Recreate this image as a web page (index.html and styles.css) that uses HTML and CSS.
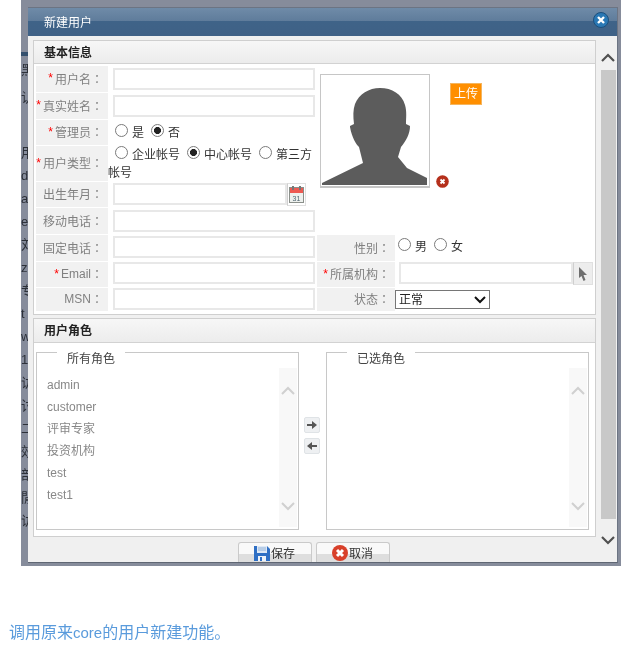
FILE: index.html
```html
<!DOCTYPE html>
<html lang="en">
<head>
  <meta charset="UTF-8" />
  <title>新建用户</title>
  <link rel="stylesheet" href="styles.css">
</head>
<body>
  <div class="backdrop">
    <div class="strip">
      <div class="strip-bar"></div>
      <div class="strip-row first">黑</div>
      <div class="strip-row second">认</div>
      <div class="strip-row">用</div>
      <div class="strip-row">d</div>
      <div class="strip-row">a</div>
      <div class="strip-row">e</div>
      <div class="strip-row">刘</div>
      <div class="strip-row">z</div>
      <div class="strip-row">专</div>
      <div class="strip-row">t</div>
      <div class="strip-row">w</div>
      <div class="strip-row">1</div>
      <div class="strip-row">访</div>
      <div class="strip-row">讨</div>
      <div class="strip-row">二</div>
      <div class="strip-row">效</div>
      <div class="strip-row">部</div>
      <div class="strip-row">閒</div>
      <div class="strip-row">访</div>
    </div>

    <div class="dialog">
      <div class="dialog-head">
        <span class="dialog-title">新建用户</span>
        <svg class="close-icon" width="16" height="16" viewBox="0 0 16 16">
          <circle cx="8" cy="8" r="7.5" fill="#2a78b4" stroke="#1d4f7c"/>
          <path d="M5 5l6 6M11 5l-6 6" stroke="#fff" stroke-width="2.4"/>
        </svg>
      </div>

      <div class="dialog-body">
        <div class="dialog-main">
          <div class="panel">
            <div class="panel-title">基本信息</div>
            <div class="form-grid">
              <div class="lbl"><i>*</i>用户名<span class="colon">：</span></div>
              <div class="cell"><input class="txt" type="text"></div>
              <div class="photo-area">
                <div class="photo">
                  <svg width="108" height="111" viewBox="1 1 108 111">
                    <path fill="#5c5c5c" d="M2 109L43 89L39 73C36 70 32 64 30 53L30 52L34 50C33 42 33 36 35 30C39 20 49 14 60 14C72 14 82 20 85 31C87 38 86 44 86 50L90 52C90 60 86 67 81 73L78 83L87 94L107 104L107 111L2 111Z"/>
                  </svg>
                </div>
                <div class="photo-side">
                  <span class="upload">上传</span>
                  <svg class="remove-icon" width="13" height="13" viewBox="0 0 13 13">
                    <circle cx="6.5" cy="6.5" r="6.3" fill="#b5301c"/>
                    <path d="M4.500 4.500l4 4M8.500 4.500l-4 4" stroke="#fff" stroke-width="1.800"/>
                  </svg>
                </div>
              </div>

              <div class="lbl"><i>*</i>真实姓名<span class="colon">：</span></div>
              <div class="cell"><input class="txt" type="text"></div>

              <div class="lbl"><i>*</i>管理员<span class="colon">：</span></div>
              <div class="cell radios"><input type="radio" name="admin">是<input type="radio" name="admin" checked>否</div>

              <div class="lbl"><i>*</i>用户类型<span class="colon">：</span></div>
              <div class="cell radios wrap"><input type="radio" name="kind">企业帐号<input type="radio" name="kind" checked>中心帐号<input type="radio" name="kind">第三方帐号</div>

              <div class="lbl">出生年月<span class="colon">：</span></div>
              <div class="cell near">
                <div class="picker date">
                  <input class="txt" type="text">
                  <span class="picker-btn">
                    <svg width="15" height="17" viewBox="0 0 15 17">
                      <rect x="0.500" y="1.500" width="14" height="15" fill="#eef1ee" stroke="#8a8f8a"/>
                      <rect x="1" y="2" width="13" height="5" fill="#ee5a52"/>
                      <rect x="3" y="0" width="2" height="4" fill="#777"/>
                      <rect x="10" y="0" width="2" height="4" fill="#777"/>
                      <text class="cal-day" x="7.500" y="14.500">31</text>
                    </svg>
                  </span>
                </div>
              </div>
              <div></div>
              <div></div>

              <div class="lbl">移动电话<span class="colon">：</span></div>
              <div class="cell"><input class="txt" type="text"></div>
              <div></div>
              <div></div>

              <div class="lbl">固定电话<span class="colon">：</span></div>
              <div class="cell near"><input class="txt" type="text"></div>
              <div class="lbl">性别<span class="colon">：</span></div>
              <div class="cell radios sex"><input type="radio" name="sex">男<input type="radio" name="sex">女</div>

              <div class="lbl"><i>*</i>Email<span class="colon">：</span></div>
              <div class="cell flush"><input class="txt" type="text"></div>
              <div class="lbl"><i>*</i>所属机构<span class="colon">：</span></div>
              <div class="cell org">
                <div class="picker">
                  <input class="txt" type="text">
                  <span class="picker-btn pointer">
                    <svg width="12" height="16" viewBox="0 0 12 16">
                      <path fill="#6e6e6e" d="M2 1l8 8H6.500l2 5-2 1-2-5L2 12z"/>
                    </svg>
                  </span>
                </div>
              </div>

              <div class="lbl">MSN<span class="colon">：</span></div>
              <div class="cell flush"><input class="txt" type="text"></div>
              <div class="lbl">状态<span class="colon">：</span></div>
              <div class="cell status">
                <select class="status-select"><option>正常</option></select>
              </div>
            </div>
          </div>

          <div class="panel roles">
            <div class="panel-title">用户角色</div>
            <div class="roles-body">
              <div class="role-box">
                <span class="legend">所有角色</span>
                <ul class="role-list">
                  <li>admin</li>
                  <li>customer</li>
                  <li>评审专家</li>
                  <li>投资机构</li>
                  <li>test</li>
                  <li>test1</li>
                </ul>
                <div class="list-scroll">
                  <svg width="14" height="9" viewBox="0 0 14 9"><path d="M1 8l6-6 6 6" fill="none" stroke="#d0d0d0" stroke-width="2"/></svg>
                  <svg width="14" height="9" viewBox="0 0 14 9"><path d="M1 1l6 6 6-6" fill="none" stroke="#d0d0d0" stroke-width="2"/></svg>
                </div>
              </div>
              <div class="move-btns">
                <span class="move-btn">
                  <svg width="10" height="10" viewBox="0 0 10 10"><path fill="#555" d="M0 4h5V1l5 4-5 4V6H0z"/></svg>
                </span>
                <span class="move-btn">
                  <svg width="10" height="10" viewBox="0 0 10 10"><path fill="#555" d="M10 4H5V1L0 5l5 4V6h5z"/></svg>
                </span>
              </div>
              <div class="role-box">
                <span class="legend">已选角色</span>
                <ul class="role-list"></ul>
                <div class="list-scroll">
                  <svg width="14" height="9" viewBox="0 0 14 9"><path d="M1 8l6-6 6 6" fill="none" stroke="#d0d0d0" stroke-width="2"/></svg>
                  <svg width="14" height="9" viewBox="0 0 14 9"><path d="M1 1l6 6 6-6" fill="none" stroke="#d0d0d0" stroke-width="2"/></svg>
                </div>
              </div>
            </div>
          </div>

          <div class="dialog-foot">
            <button class="foot-btn" type="button">
              <svg width="16" height="16" viewBox="0 0 16 16">
                <path fill="#2f6fc4" d="M0 1h13l3 3v12H0z"/>
                <rect x="3" y="1" width="10" height="7" fill="#dfe9f5"/>
                <path d="M4 3h8M4 5h8" stroke="#8fb0d8"/>
                <rect x="4" y="11" width="8" height="5" fill="#eef2f8"/>
                <rect x="6" y="12" width="2" height="4" fill="#2f6fc4"/>
              </svg>保存
            </button>
            <button class="foot-btn" type="button">
              <svg width="16" height="16" viewBox="0 0 16 16">
                <circle cx="8" cy="8" r="8" fill="#d8402a"/>
                <path d="M5 5l6 6M11 5l-6 6" stroke="#fff" stroke-width="3"/>
              </svg>取消
            </button>
          </div>
        </div>

        <div class="scrollbar">
          <svg width="14" height="9" viewBox="0 0 14 9"><path d="M1 8l6-6 6 6" fill="none" stroke="#505050" stroke-width="2.200"/></svg>
          <div class="scroll-thumb"></div>
          <svg width="14" height="9" viewBox="0 0 14 9"><path d="M1 1l6 6 6-6" fill="none" stroke="#505050" stroke-width="2.200"/></svg>
        </div>
      </div>
    </div>
  </div>

  <p class="caption">调用原来<span class="latin">core</span>的用户新建功能。</p>
</body>
</html>
```

FILE: styles.css
```css
* {
  box-sizing: border-box;
}
body {
  margin: 0;
  background: #fff;
  font-family: "Liberation Sans", "Noto Sans CJK SC", sans-serif;
  font-size: 12px;
  color: #333;
}
.backdrop {
  display: flex;
  height: 566px;
  margin-left: 21px;
  padding-top: 7px;
  background: #868c9b;
  filter: blur(0.5px);
}
.strip {
  width: 7px;
  margin-top: -7px;
  padding-top: 52px;
  overflow: hidden;
  color: #2c3038;
  line-height: 23px;
  font-size: 13px;
}
.strip-bar {
  height: 4px;
  margin-bottom: 2px;
  background: #34506e;
}
.strip-row {
  height: 23px;
  white-space: nowrap;
}
.strip-row.first {
  height: 28px;
}
.strip-row.second {
  height: 55px;
}

.dialog {
  width: 590px;
  height: 556px;
  border-top: 1px solid #6c7483;
  border-right: 1px solid #6c7483;
  border-bottom: 1px solid #5f6673;
  background: #f0f0f0;
  display: flex;
  flex-direction: column;
}
.dialog-head {
  height: 28px;
  flex: none;
  padding: 0 8px 2px 16px;
  display: flex;
  align-items: center;
  justify-content: space-between;
  background: linear-gradient(#6f8ba8 0, #5f7c9b 46%, #3f6388 47%, #3f6186 100%);
  color: #fff;
  font-size: 12px;
}
.close-icon {
  margin-top: -2px;
}
.dialog-body {
  flex: 1;
  display: flex;
  min-height: 0;
}
.dialog-main {
  width: 568px;
  padding: 4px 0 0 5px;
  display: flex;
  flex-direction: column;
  flex: none;
  margin-right: 4px;
}

.panel {
  height: 276px;
  border: 1px solid #cfcfcf;
  background: #fff;
}
.panel.roles {
  height: 219px;
  margin-top: 3px;
}
.panel-title {
  height: 23px;
  padding-left: 10px;
  line-height: 24px;
  border-bottom: 1px solid #d2d2d2;
  background: linear-gradient(#f7f7f7, #ececec);
  color: #222;
  font-weight: bold;
}
.roles .panel-title {
  height: 24px;
}

.form-grid {
  display: grid;
  grid-template-columns: 72px 209px 78px 200px;
  grid-template-rows: 26px 26px 25px 35px 25px 26px 26px 25px 23px;
  row-gap: 1px;
  padding: 2px 0 0 2px;
}
.lbl {
  display: flex;
  align-items: center;
  justify-content: flex-end;
  padding: 0 5px 2px 0;
  background: #f1f1f1;
  color: #808080;
  white-space: nowrap;
}
.lbl i {
  color: #f00;
  font-style: normal;
  margin-right: 2px;
}
.colon {
  font-family: "Noto Sans CJK TC", sans-serif;
}
.cell {
  padding: 2px 2px 0 5px;
}
.cell.near {
  padding-top: 1px;
}
.cell.flush {
  padding-top: 0;
}
.txt {
  display: block;
  width: 202px;
  height: 22px;
  padding: 0 3px;
  border: 2px solid #e8e8e8;
  background: #fff;
  outline: none;
}
.radios {
  padding: 4px 0 0;
  line-height: 16px;
}
.radios input {
  appearance: none;
  width: 13px;
  height: 13px;
  margin: 0 4px 0 7px;
  vertical-align: 0;
  border: 1px solid #7b7b7b;
  border-radius: 50%;
  background: #fff;
}
.radios input:checked {
  background: radial-gradient(circle, #222 0, #222 3.2px, #fff 3.8px);
}
.wrap {
  padding-top: 0;
  line-height: 18px;
}
.sex {
  padding-left: 0;
  padding-top: 3px;
}
.sex input {
  margin-left: 3px;
}
.sex input + input {
  margin-left: 7px;
}

.photo-area {
  grid-column: 3 / 5;
  grid-row: 1 / 5;
  display: flex;
  padding: 8px 0 0 3px;
  height: 122px;
}
.photo {
  width: 110px;
  height: 114px;
  flex: none;
  border: 1px solid #c6c6c6;
  border-bottom-width: 2px;
  background: #fff;
  overflow: hidden;
}
.photo svg {
  display: block;
}
.photo-side {
  display: flex;
  flex-direction: column;
  align-items: flex-start;
  justify-content: space-between;
  margin-left: 6px;
  height: 114px;
}
.upload {
  width: 32px;
  height: 22px;
  margin: 9px 0 0 14px;
  border: 1px solid #f5b55e;
  background: #ff8f00;
  color: #fff;
  line-height: 20px;
  text-align: center;
}
.remove-icon {
  display: block;
}

.picker {
  display: flex;
}
.picker .txt {
  width: 174px;
}
.picker-btn {
  width: 19px;
  height: 23px;
  display: flex;
  align-items: center;
  justify-content: center;
  flex: none;
  border: 1px solid #e0e0e0;
  border-left-color: #cfcfcf;
  background: #f4f4f4;
}
.date .picker-btn {
  background: #fff;
}
.cal-day {
  font-family: "Liberation Sans", sans-serif;
  font-size: 7px;
  text-anchor: middle;
  fill: #4f6470;
}
.pointer {
  width: 20px;
  background: #ededed;
}
.org {
  padding: 0 0 0 4px;
}
.status {
  padding: 2px 0 0;
}
.status-select {
  appearance: none;
  display: block;
  width: 95px;
  height: 19px;
  padding: 0 0 0 3px;
  border: 1px solid #767676;
  background: #fff url("data:image/svg+xml,%3Csvg xmlns='http://www.w3.org/2000/svg' width='12' height='8'%3E%3Cpath d='M1 1l5 5 5-5' fill='none' stroke='%23111' stroke-width='2'/%3E%3C/svg%3E") no-repeat right 3px center;
  font-family: inherit;
  font-size: 12px;
  color: #222;
}

.roles-body {
  display: flex;
  padding: 9px 6px 0 2px;
}
.role-box {
  position: relative;
  width: 263px;
  height: 178px;
  flex: none;
  display: flex;
  border: 1px solid #c8c8c8;
  background: #fff;
}
.legend {
  position: absolute;
  top: -1px;
  left: 20px;
  padding: 0 10px;
  line-height: 14px;
  background: #fff;
  color: #444;
}
.role-list {
  flex: 1;
  margin: 0;
  padding: 21px 0 0 10px;
  list-style: none;
  color: #888;
  line-height: 22px;
}
.list-scroll {
  width: 18px;
  margin: 15px 1px 2px 0;
  padding: 18px 0 16px;
  display: flex;
  flex-direction: column;
  align-items: center;
  justify-content: space-between;
  background: #f8f8f8;
}
.move-btns {
  width: 27px;
  flex: none;
  padding: 65px 0 0 5px;
  display: flex;
  flex-direction: column;
  gap: 5px;
}
.move-btn {
  width: 16px;
  height: 16px;
  display: flex;
  align-items: center;
  justify-content: center;
  border: 1px solid #dfe3e6;
  border-radius: 2px;
  background: #eef0f2;
}

.dialog-foot {
  flex: 1;
  display: flex;
  justify-content: center;
  align-items: flex-end;
  gap: 4px;
  padding: 5px 2px 0 0;
}
.foot-btn {
  width: 74px;
  height: 20px;
  padding: 0;
  display: flex;
  align-items: center;
  justify-content: center;
  gap: 1px;
  border: 1px solid #cacaca;
  border-bottom: 0;
  border-radius: 3px 3px 0 0;
  background: linear-gradient(#f9f9f9 0, #f9f9f9 58%, #dedede 59%, #dedede 100%);
  font-family: inherit;
  font-size: 12px;
  color: #333;
}

.scrollbar {
  width: 16px;
  flex: none;
  padding-top: 17px;
  display: flex;
  flex-direction: column;
  align-items: center;
}
.scroll-thumb {
  width: 15px;
  height: 449px;
  margin: 8px 0 17px;
  background: #c8c8c8;
}

.caption {
  margin: 57px 0 0 9px;
  font-size: 16px;
  line-height: 20px;
  color: #5a9bdc;
  filter: blur(0.3px);
}
.latin {
  font-size: 15px;
}
```
